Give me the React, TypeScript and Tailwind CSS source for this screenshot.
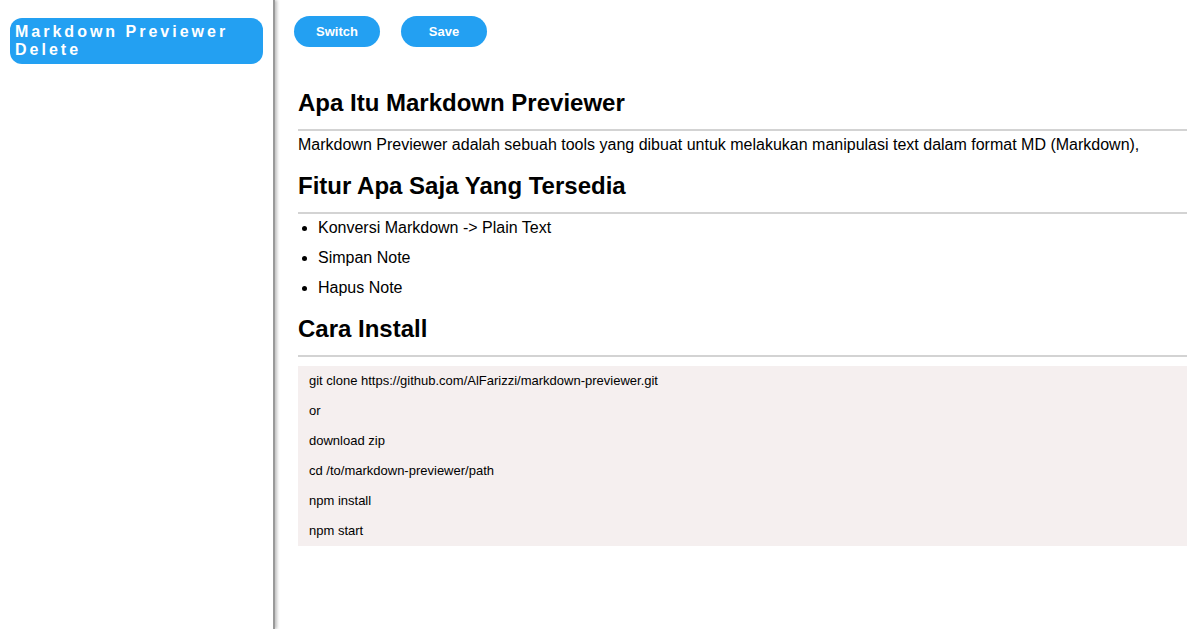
const installSteps = [
  'git clone https://github.com/AlFarizzi/markdown-previewer.git',
  'or',
  'download zip',
  'cd /to/markdown-previewer/path',
  'npm install',
  'npm start',
];

const features = ['Konversi Markdown -> Plain Text', 'Simpan Note', 'Hapus Note'];

function Sidebar() {
  return (
    <aside className="w-[275px] shrink-0 border-r-2 border-[#9a9a9a] shadow-[2px_0_3px_rgba(0,0,0,0.25)] min-h-screen">
      <div className="mx-[10px] mt-[18px] h-[46px] rounded-[12px] bg-[#23a0f2] pl-[5px] pt-[5px] text-[16px] font-bold leading-[18px] tracking-[3px] text-white">
        <div>Markdown Previewer</div>
        <div>Delete</div>
      </div>
    </aside>
  );
}

function Preview() {
  return (
    <div className="ml-1 text-black">
      <h2 className="mt-[42px] text-[24px] font-bold leading-[28px]">Apa Itu Markdown Previewer</h2>
      <hr className="mt-[12px] border-t-2 border-[#d3d3d3]" />
      <p className="mt-[5px] text-[16px] leading-[18px]">
        Markdown Previewer adalah sebuah tools yang dibuat untuk melakukan manipulasi text dalam format MD (Markdown),
      </p>
      <h2 className="mt-[18px] text-[24px] font-bold leading-[28px]">Fitur Apa Saja Yang Tersedia</h2>
      <hr className="mt-[12px] border-t-2 border-[#d3d3d3]" />
      <ul className="list-disc pl-5 text-[16px] leading-[18px]">
        {features.map((f, i) => (
          <li key={i} className={i === 0 ? 'mt-[5px]' : 'mt-[12px]'}>
            {f}
          </li>
        ))}
      </ul>
      <h2 className="mt-[18px] text-[24px] font-bold leading-[28px]">Cara Install</h2>
      <hr className="mt-[12px] border-t-2 border-[#d3d3d3]" />
      <div className="mt-[9px] bg-[#f5efef] pl-[11px] pt-[7px] pb-[8px] text-[13px] leading-[15px]">
        {installSteps.map((s, i) => (
          <div key={i} className={i === 0 ? '' : 'mt-[15px]'}>
            {s}
          </div>
        ))}
      </div>
    </div>
  );
}

export default function App() {
  return (
    <div className="flex min-h-screen bg-white font-['Liberation_Sans',Arial,sans-serif]">
      <Sidebar />
      <main className="flex-1 pl-[19px]">
        <div className="mt-4 flex gap-[21px]">
          <button className="h-[31px] w-[86px] rounded-full bg-[#23a0f2] text-[13px] font-bold text-white">
            Switch
          </button>
          <button className="h-[31px] w-[86px] rounded-full bg-[#23a0f2] text-[13px] font-bold text-white">
            Save
          </button>
        </div>
        <Preview />
      </main>
    </div>
  );
}
